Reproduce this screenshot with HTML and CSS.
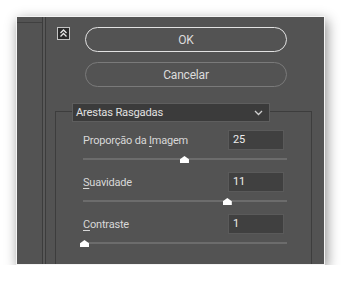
FILE: index.html
```
<!DOCTYPE html>
<html lang="pt-br">
<head>
    <meta charset="UTF-8">
    <meta name="viewport" content="width=device-width, initial-scale=1.0">
    <link rel="stylesheet" href="styles.css">
    <title>Arestas Rasgadas</title>
</head>
<body>

    <div class="janela">
        <div class="lateral"><span class="traco"></span></div>

        <div class="conteudo">
            <div class="topo">
                <span class="recolher">
                    <svg width="11" height="11" viewBox="0 0 11 11">
                        <polyline points="2.5,5 5.5,2 8.5,5" fill="none" stroke="#e6e6e6" stroke-width="1.3"/>
                        <polyline points="2.5,8.5 5.5,5.5 8.5,8.5" fill="none" stroke="#e6e6e6" stroke-width="1.3"/>
                    </svg>
                </span>
                <div class="botoes">
                    <button class="botao ok">OK</button>
                    <button class="botao">Cancelar</button>
                </div>
            </div>

            <div class="grupo">
                <div class="lista">
                    <span>Arestas Rasgadas</span>
                    <svg width="9" height="6" viewBox="0 0 9 6">
                        <polyline points="1,1 4.5,4.5 8,1" fill="none" stroke="#cfcfcf" stroke-width="1.3"/>
                    </svg>
                </div>

                <div class="linha">
                    <div class="cabeca">
                        <span class="rotulo">Proporção da <u>I</u>magem</span>
                        <span class="campo">25</span>
                    </div>
                    <div class="trilho"><span class="cursor" style="left: 49.5%"></span></div>
                </div>

                <div class="linha">
                    <div class="cabeca">
                        <span class="rotulo"><u>S</u>uavidade</span>
                        <span class="campo">11</span>
                    </div>
                    <div class="trilho"><span class="cursor" style="left: 70.5%"></span></div>
                </div>

                <div class="linha">
                    <div class="cabeca">
                        <span class="rotulo"><u>C</u>ontraste</span>
                        <span class="campo">1</span>
                    </div>
                    <div class="trilho"><span class="cursor" style="left: 0.5%"></span></div>
                </div>
            </div>
        </div>
    </div>

</body>
</html>
```

FILE: styles.css
```
body {
    margin: 0;
    background-color: #ffffff;
    font-family: Roboto, "Noto Sans", sans-serif;
    font-size: 11px;
    letter-spacing: -0.2px;
    color: #d8d8d8;
}

.janela {
    box-sizing: border-box;
    width: 309px;
    height: 249px;
    margin: 16px 0 0 16px;
    border: 1px solid #f4f4f4;
    background-color: #535353;
    box-shadow: 2px 4px 12px rgba(0, 0, 0, 0.45);
    display: flex;
    overflow: hidden;
}

.lateral {
    width: 25px;
    flex: none;
    border-right: 1px solid #3c3c3c;
    box-shadow: 2px 0 0 #595959, 3px 0 0 #3c3c3c;
}
.traco {
    display: block;
    margin-top: 5px;
    height: 1px;
    background-color: #404040;
}

.conteudo {
    flex: 1;
    margin-left: 3px;
    padding-top: 10px;
}

.topo {
    display: flex;
    align-items: flex-start;
    padding-left: 11px;
    gap: 15px;
}

.recolher {
    box-sizing: border-box;
    width: 13px;
    height: 13px;
    border: 1px solid #c4c4c4;
    background-color: #2b2b2b;
    display: flex;
    align-items: center;
    justify-content: center;
}

.botoes {
    display: flex;
    flex-direction: column;
    gap: 10px;
}
.botao {
    box-sizing: border-box;
    width: 202px;
    height: 25px;
    border-radius: 13px;
    border: 1.5px solid #7a7a7a;
    background-color: transparent;
    color: #dcdcdc;
    font-family: inherit;
    font-size: 12px;
    letter-spacing: inherit;
    padding: 0;
}
.ok {
    border-color: #e2e2e2;
}

.grupo {
    margin: 24px 12px 0 9px;
    border: 1px solid #3d3d3d;
    border-bottom: none;
    height: 160px;
    padding: 0 27px;
}

.lista {
    box-sizing: border-box;
    width: 198px;
    height: 19px;
    margin: -9px 0 0 -11px;
    padding: 0 6px 0 3px;
    border: 1px solid #5e5e5e;
    background-color: #3b3b3b;
    display: flex;
    align-items: center;
    justify-content: space-between;
    color: #e0e0e0;
    font-size: 11.2px;
}

.linha {
    margin-top: 8px;
}
.linha + .linha {
    margin-top: 12px;
}

.cabeca {
    display: flex;
    justify-content: space-between;
    align-items: center;
    height: 20px;
}
.rotulo u {
    text-decoration-thickness: 1px;
    text-underline-offset: 2px;
}
.campo {
    box-sizing: border-box;
    width: 56px;
    height: 20px;
    padding-left: 4px;
    border: 1px solid #5a5a5a;
    background-color: #404040;
    color: #ececec;
    line-height: 18px;
}

.trilho {
    position: relative;
    margin: 8px -3px 0 0;
    height: 2px;
    background-color: #6c6c6c;
}
.cursor {
    position: absolute;
    top: -2px;
    width: 9px;
    height: 7px;
    margin-left: -4px;
    background-color: #ffffff;
    clip-path: polygon(0 100%, 0 45%, 50% 0, 100% 45%, 100% 100%);
}
```
